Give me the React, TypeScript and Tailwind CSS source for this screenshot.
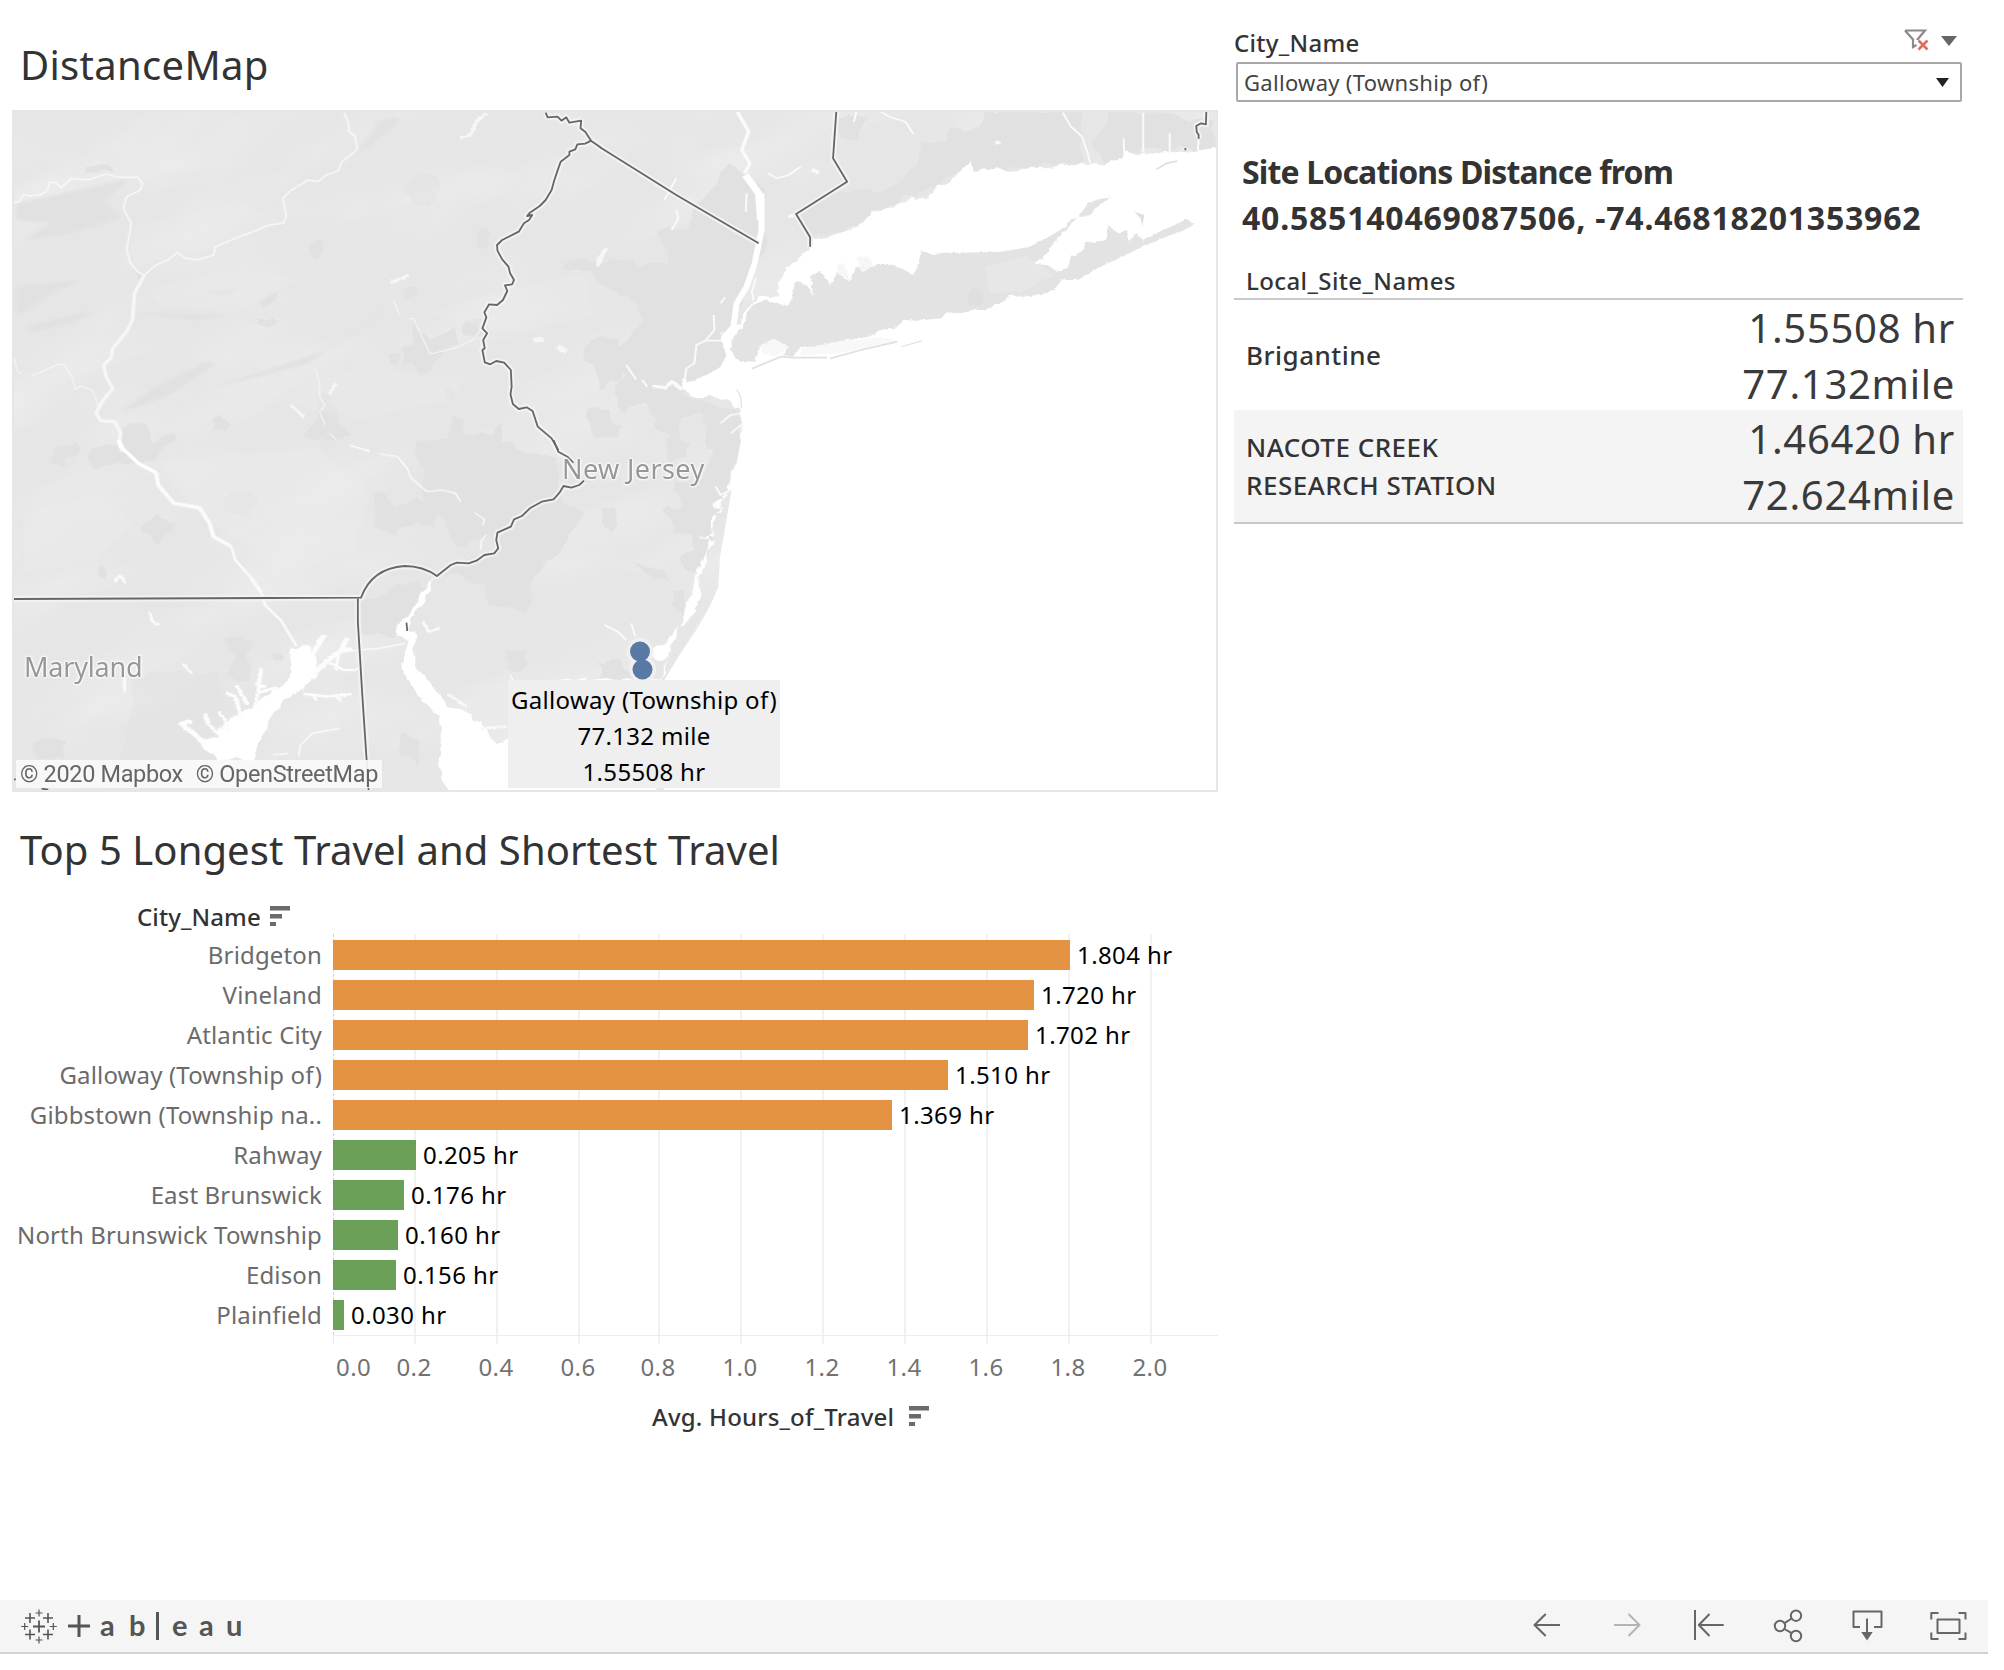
import type { ReactNode } from "react";

const BARS = [
  { city: "Bridgeton", value: "1.804 hr", width: 737, long: true },
  { city: "Vineland", value: "1.720 hr", width: 701, long: true },
  { city: "Atlantic City", value: "1.702 hr", width: 695, long: true },
  { city: "Galloway (Township of)", value: "1.510 hr", width: 615, long: true },
  { city: "Gibbstown (Township na..", value: "1.369 hr", width: 559, long: true },
  { city: "Rahway", value: "0.205 hr", width: 83, long: false },
  { city: "East Brunswick", value: "0.176 hr", width: 71, long: false },
  { city: "North Brunswick Township", value: "0.160 hr", width: 65, long: false },
  { city: "Edison", value: "0.156 hr", width: 63, long: false },
  { city: "Plainfield", value: "0.030 hr", width: 11, long: false },
];

const TICKS = [
  { label: "0.2", x: 81 },
  { label: "0.4", x: 163 },
  { label: "0.6", x: 245 },
  { label: "0.8", x: 325 },
  { label: "1.0", x: 407 },
  { label: "1.2", x: 489 },
  { label: "1.4", x: 571 },
  { label: "1.6", x: 653 },
  { label: "1.8", x: 735 },
  { label: "2.0", x: 817 },
];

const SITES = [
  { name: ["Brigantine"], hours: "1.55508 hr", miles: "77.132mile" },
  { name: ["NACOTE CREEK", "RESEARCH STATION"], hours: "1.46420 hr", miles: "72.624mile" },
];

/* The map is drawn in four quadrant tiles, each with its own coordinate grid. */
const NW = "translate(0 100) scale(0.39541 0.33333)";
const NE = "translate(600 100) scale(0.40179 0.33333)";
const SW = "translate(0 440) scale(0.39541 0.33333)";
const SE = "translate(600 440) scale(0.40179 0.33333)";

const PARK = "#e1e1e1";
const HILL = "#ebebeb";
const RIVER = "#f6f6f6";

const DELAWARE_NW =
  "M1380 38L1385 52L1410 50L1420 62L1432 52L1440 68L1470 62L1468 85L1480 95L1495 122L1480 131L1460 133L1455 148L1440 155L1440 165L1418 185L1410 212L1402 240L1395 270L1380 300L1365 318L1340 338L1333 348L1346 345L1338 360L1325 370L1312 395L1270 420L1257 435L1258 452L1270 478L1286 500L1290 520L1300 540L1295 553L1277 556L1283 573L1272 600L1257 615L1237 613L1225 637L1230 652L1220 685L1232 700L1222 720L1226 745L1220 750L1226 787L1240 793L1255 783L1275 788L1292 810L1294 860L1291 883L1297 912L1312 927L1332 922L1347 933L1360 980L1395 1015L1412 1050";
const DELAWARE_SW =
  "M1400 0L1412 35L1435 50L1450 68M1477 122L1465 135L1445 143L1425 138L1415 158L1400 178L1370 185L1340 205L1320 228L1300 238L1292 260L1258 278L1255 300L1260 325L1250 340L1225 345L1205 362L1185 370L1155 368L1140 375L1105 408Q1070 378 1023 378Q940 385 913 473L35 477M905 475L905 545L916 760L930 1010L932 1050";
const NE_LINES = "M0 142L190 285L395 430M588 36L580 175L615 245L488 342L523 412L523 440M1509 36L1508 73L1496 70L1484 78L1485 95L1490 105L1490 116M1457 144L1457 151";

const ISLAND =
  "M380 615L410 600L440 608L468 618L478 590L483 560L490 541L505 552L520 560L530 592L525 530L545 512L560 530L575 555L590 515L600 530L622 543L630 515L645 500L655 515L690 492L720 492L750 505L780 525L790 500L800 453L830 465L855 458L900 458L1000 455L1070 440L1110 415L1160 380L1170 360L1190 352L1215 310L1240 298L1272 292L1245 315L1226 330L1222 345L1190 350L1170 375L1145 405L1120 445L1100 478L1070 490L1110 495L1140 515L1165 500L1172 470L1205 450L1208 425L1235 425L1262 420L1262 375L1290 400L1312 390L1315 425L1335 400L1352 422L1385 400L1430 375L1460 357L1478 370L1465 385L1420 405L1350 440L1230 510L1190 540L1150 540L1130 570L1095 585L1090 585L1050 590L1018 585L1010 600L960 630L925 630L900 640L862 637L850 655L790 662L755 660L735 685L700 690L670 710L600 722L545 742L500 740L480 770L455 765L470 740L430 716L400 738L385 785L345 783L325 755L328 720L345 690L360 675L365 640Z";

function MapCanvas() {
  return (
    <svg viewBox="14 112 1202 678" className="block h-[678px] w-[1202px]" fill="none">
      <defs>
        <filter id="shore" x="-5%" y="-5%" width="110%" height="110%">
          <feTurbulence type="fractalNoise" baseFrequency="0.09" numOctaves="3" seed="4" />
          <feDisplacementMap in="SourceGraphic" scale="9" xChannelSelector="R" yChannelSelector="G" />
        </filter>
        <filter id="edge" x="-5%" y="-5%" width="110%" height="110%">
          <feTurbulence type="fractalNoise" baseFrequency="0.05" numOctaves="2" seed="9" />
          <feDisplacementMap in="SourceGraphic" scale="14" xChannelSelector="R" yChannelSelector="G" />
        </filter>
        <filter id="relief" x="0" y="0" width="100%" height="100%">
          <feTurbulence type="fractalNoise" baseFrequency="0.006 0.016" numOctaves="3" seed="11" />
          <feColorMatrix values="0 0 0 0 1  0 0 0 0 1  0 0 0 0 1  2.6 0 0 0 -1.15" />
        </filter>
        <filter id="soft">
          <feGaussianBlur stdDeviation="5" />
        </filter>
      </defs>
      <rect x="14" y="112" width="1202" height="678" fill="#e6e6e6" />
      <g transform="rotate(-18 400 400)" opacity="0.22">
        <rect x="-200" y="-200" width="1500" height="1300" filter="url(#relief)" />
      </g>

      {/* ridges of the Appalachians */}
      <g transform={NW} filter="url(#soft)" fill="#e1e1e1">
        <path d="M40 310L200 270L330 235L260 310L310 350L180 400L60 420L130 370L40 360Z" />
        <path d="M40 560L200 540L120 590L40 650Z" />
        <path d="M60 680L240 630L200 660L80 700Z" />
        <path d="M340 640L580 645L500 660Z" />
        <path d="M540 860L700 800L840 745L960 640L1000 600L900 690L780 790L620 840Z" />
        <path d="M300 940L380 870L520 785L550 790L420 890Z" />
        <path d="M520 575L620 560L560 590Z" />
        <path d="M900 170L960 60L1010 50L1000 80L920 150Z" />
      </g>
      <g filter="url(#edge)">
        <g transform={NW} fill={PARK}>
          <path d="M215 200L270 200L275 215L235 232L216 220Z" />
          <path d="M775 440L800 415L823 425L822 460L795 482L778 470Z" />
          <path d="M655 600L675 567L700 575L695 600L665 615Z" />
          <path d="M645 675L660 650L695 650L700 670L680 690Z" />
          <path d="M540 955L560 950L582 975L565 995L540 985Z" />
          <path d="M1045 670L1085 710L1150 675L1157 730L1100 780L1060 830L1045 800L1018 795L1018 740L1048 735Z" />
          <path d="M1170 665L1218 655L1240 690L1200 710L1175 700Z" />
          <path d="M1205 400L1225 388L1240 400L1232 440L1210 450L1202 430Z" />
          <path d="M1020 575L1055 568L1055 590L1035 597Z" />
          <path d="M985 760L1010 755L1010 785L990 788Z" />
          <path d="M800 890L840 890L855 970L885 1018L790 1018L770 1000L800 950Z" />
          <path d="M1025 250L1075 210L1110 240L1112 290L1070 315L1030 285Z" opacity="0.5" />
          <path d="M340 970L370 965L385 1025L440 995L448 1015L425 1050L310 1050L310 985Z" />
          <path d="M1480 740L1520 705L1568 720L1568 840L1520 865L1500 800L1478 780Z" />
          <path d="M1425 495L1460 475L1500 490L1568 480L1568 540L1510 545L1490 505L1440 515Z" />
          <path d="M1145 950L1172 955L1180 1010L1240 1000L1275 965L1270 1050L1135 1050Z" />
          <path d="M1130 870L1150 870L1150 908L1130 905Z" />
          <path d="M1490 930L1540 925L1540 965L1568 985L1568 1010L1500 1010Z" />
          <path d="M345 510L365 507L370 540L350 540Z" />
        </g>
        <g transform={NE} fill={PARK}>
          <path d="M0 500L60 480L90 495L165 488L165 440L140 400L230 385L240 320L300 230L320 190L370 230L410 260L410 420L380 540L330 650L320 700L300 800L210 850L200 880L340 930L355 960L350 1050L260 1050L275 985L240 940L205 950L200 1030L150 1000L140 960L110 910L60 940L30 880L60 820L0 780L60 740L110 660L90 610L0 560Z" />
          <path d="M590 60L620 40L665 50L645 115L600 110Z" />
          <path d="M870 90L950 75L960 36L1200 36L1200 185L1040 205L925 215L905 195L850 245L780 285L715 315L600 395L525 415L495 340L600 270L700 270L760 240L790 190L800 125L870 130Z" />
          <path d="M1270 36L1340 36L1530 60L1530 145L1350 150L1260 190L1230 130Z" />
        </g>
        <g transform={SW} fill={PARK}>
          <path d="M125 70L140 40L195 10L200 35L170 55L160 80Z" />
          <path d="M230 30L320 0L450 0L420 30L360 75L230 75Z" />
          <path d="M560 190L590 155L640 150L658 190L630 230L570 220Z" />
          <path d="M352 260L385 230L400 208L412 240L445 245L440 275L400 308L360 280Z" />
          <path d="M950 160L980 170L985 200L1020 190L1050 165L1105 220L1100 250L1050 245L1000 290L950 255Z" />
          <path d="M1050 0L1250 0L1400 50L1420 180L1480 220L1450 260L1420 330L1380 350L1330 440L1350 480L1320 505L1240 500L1210 430L1160 400L1120 410L1140 370L1250 340L1250 280L1150 320L1130 250L1080 200Z" />
          <path d="M245 385L265 378L275 400L265 418L250 410Z" />
          <path d="M570 600L600 590L632 600L630 720L600 728L575 700L590 650Z" />
          <path d="M684 640L705 625L718 640L715 662L690 665Z" />
          <path d="M915 490L1000 440L1060 420L1080 450L1000 560L1000 585L915 580Z" />
          <path d="M340 720L440 690L550 700L570 830L520 910L550 960L310 960L320 860Z" opacity="0.55" />
          <path d="M90 905L120 890L170 905L165 955L95 955Z" />
          <path d="M1285 635L1330 630L1330 680L1300 700L1290 690Z" />
          <path d="M1510 670L1568 665L1568 700L1530 700Z" />
          <path d="M1012 885L1060 900L1060 975L1020 950Z" />
        </g>
        <g transform={SE} fill={PARK}>
          <path d="M160 0L215 0L215 50L180 60Z" />
          <path d="M290 0L350 0L325 150L300 200L270 260L285 300L260 350L245 400L215 400L195 350L240 330L225 290L180 280L175 230L155 215L165 195L205 200L190 130L250 120Z" />
          <path d="M5 210L35 200L40 250L20 270L5 250Z" />
          <path d="M85 370L140 390L180 420L120 410Z" />
          <path d="M180 445L205 445L225 530L185 500Z" />
          <path d="M0 670L50 655L65 680L90 720L0 720Z" />
        </g>
      </g>
      <g transform={NW} fill={HILL} opacity="0.4" filter="url(#soft)">
        <path d="M330 380L600 300L720 370L560 440L340 500Z" />
        <path d="M380 560L620 500L760 540L600 640L400 620Z" />
        <path d="M1080 640L1300 560L1480 520L1500 650L1300 700Z" />
        <path d="M700 900L900 800L1180 830L1150 900L900 960Z" />
      </g>
      <g transform={SW} fill={HILL} opacity="0.5" filter="url(#soft)">
        <path d="M400 60L800 20L940 150L900 330L700 420L640 340L480 200Z" />
        <path d="M60 220L250 160L340 250L240 360L60 400Z" />
      </g>

      {/* bays, sound and ocean */}
      <g fill="#fff">
        <g filter="url(#shore)">
          <path transform={NE} d="M1560 138L1500 150L1480 163L1420 152L1385 155L1340 165L1315 155L1303 170L1280 178L1260 190L1215 195L1170 192L1110 205L1060 203L1035 215L1000 205L970 208L935 220L925 215L919 170L905 208L880 235L868 252L850 250L835 270L815 298L800 295L780 288L760 305L740 318L680 335L655 360L620 390L580 405L535 418L522 445L495 478L465 505L450 540L442 555L450 585L400 592L378 612L360 640L352 675L300 700L305 725L315 770L300 795L275 820L240 838L205 845L205 870L235 892L290 890L330 915L350 930L355 1050L1560 1050Z" />
          <path transform={SE} d="M354 0L345 60L332 145L300 165L308 172L278 195L305 210L275 245L285 290L242 290L290 305L262 340L268 370L245 410L252 470L228 530L180 575L168 605L150 625L170 650L150 700L150 740L140 1060L-120 1060L-120 720L150 720L360 -5Z" />
        </g>
        <path transform={NE} d="M355 1000L353 1060L1560 1060L1560 600L1200 560Z" />
        <path transform={SE} d="M353 -10L330 130L318 200L305 290L295 350L292 440L270 500L240 560L195 650L160 720L160 1060L1560 1060L1560 -10Z" />
      </g>
      <g transform={SE} stroke="#e6e6e6">
        <path d="M326 150L318 205L306 290L297 350L293 440L272 498L243 560L196 645" strokeWidth="3" />
      </g>
      <g transform={NE} filter="url(#shore)">
        <path d={ISLAND} fill="#e3e3e3" />
        <path d="M930 560L955 580L950 615L920 620L915 585Z" fill="#dfdfdf" />
        <path d="M960 500L1060 470L1100 500L1130 525L1050 575L970 580Z" fill="#e7e7e7" />
        <path d="M400 740L432 716L470 742L440 768L405 765ZM500 745L600 725L700 712L745 720L700 735L600 760L500 765Z" fill="#f8f8f8" />
        <path d="M590 500L605 485L622 540L595 520ZM640 470L670 470L680 500L650 515Z" fill="#f6f6f6" />
      </g>
      <g transform={NE} stroke="#e0e0e0" strokeWidth="5">
        <path d="M378 806L450 770L480 773L565 773M572 776L650 750L740 725M1385 208L1410 190L1437 183" />
        <path d="M750 740L802 722M340 868L350 890L353 925" strokeWidth="3" />
        <path d="M1330 335L1355 345L1350 378L1345 355Z" fill="#e0e0e0" stroke="none" />
      </g>
      <path transform={NE} d="M300 730L315 765L300 800L270 822L215 848L215 810L238 770L240 732L270 735Z" fill="#e1e1e1" />

      <g fill="#fff" filter="url(#shore)">
        <path transform={SW} d="M1105 408L1080 430L1060 475L1030 530L1002 560L1005 590L1030 608L1015 680L1030 712L1062 775L1110 830L1115 900L1110 1000L1145 1060L1400 1060L1400 900L1285 895L1255 915L1235 880L1190 820L1130 795L1085 720L1045 680L1045 630L1053 590L1030 565L1048 520L1075 480L1090 430Z" />
        <path transform={SW} d="M742 620L792 622L800 650L795 680L800 700L765 750L722 775L695 815L668 870L642 960L560 960L515 925L500 890L550 900L548 870L600 820L640 800L670 765L735 712L742 690L728 660Z" />
      </g>
      <g transform={SW} stroke="#fcfcfc" strokeLinejoin="round" strokeLinecap="round" filter="url(#shore)">
        <path strokeWidth="13" d="M792 640L805 615L818 588M795 700L830 660L862 632L876 600M865 632L885 628M515 910L490 880L458 852L480 845" />
        <path strokeWidth="10" d="M550 880L525 850L520 825M575 870L570 840L555 820M610 830L595 770L575 760M600 740L625 790M645 800L655 740L660 690M660 755L700 745M670 740L650 735" />
        <path strokeWidth="8" d="M835 670L870 690L903 690M770 762L830 770L888 762M790 765L800 780M850 765L860 780M855 645L850 690" />
      </g>

      {/* rivers */}
      <g transform={NW} stroke={RIVER} strokeLinejoin="round">
        <path strokeWidth="5" d="M35 308L48 305L60 283L75 288L105 283L120 270L125 247L140 247L155 263L180 235L220 240L270 222L298 232L348 232L360 250L355 270L320 290L312 325L332 370L320 450L330 490L350 517L365 525" />
        <path strokeWidth="5" d="M365 525L395 495L425 480L448 458L470 475L500 480L540 465L545 440L610 408L640 395L680 375L715 370L724 350L715 295L735 272L780 240L805 245L825 225L855 212L865 185L903 150L898 108L883 95L880 65L870 38" />
        <path strokeWidth="9" d="M365 525L340 580L335 660L320 695L285 745L280 775L262 795L268 830L285 865L258 905L243 940L255 962L290 965L305 1000L300 1030L310 1055" />
        <path strokeWidth="3" d="M37 775L42 810L55 823M80 828L150 792L163 795L183 835L190 868L205 858L235 872L247 910L247 930M995 600L1010 645M1033 658L1045 655L1088 762L1150 745L1195 720L1218 688M797 805L808 850L808 890L822 915L808 935L822 975M835 1000L850 1020M885 1038L935 1050" />
        <g filter="url(#shore)">
          <path strokeWidth="9" d="M1230 40L1205 65L1190 105L1160 115M1535 445L1515 470L1512 500M988 548L1035 525M735 915L770 952M850 850L832 885" />
          <path strokeWidth="14" d="M1408 740L1432 755M1350 720L1375 718" />
        </g>
      </g>
      <g transform={NE} stroke="#fafafa" strokeLinejoin="round">
        <path strokeWidth="9" d="M342 36L370 95L353 150L373 190L360 220" />
        <path strokeWidth="18" d="M362 225L395 280L400 360" stroke="#fff" />
        <path strokeWidth="15" d="M402 280L402 390L385 490L365 560L340 610L332 680L310 710" stroke="#fff" />
        <path strokeWidth="5" d="M388 535L378 575L382 600M365 280L363 335M210 845L215 805L235 790L240 735L262 722L300 722M283 645L285 690L262 722M190 235L160 300M190 330L195 355L178 390M418 220L440 235L470 225L500 200M300 610L312 592M65 795L90 838M105 840L118 860" />
        <path strokeWidth="5" d="M1152 38L1172 80L1200 110L1215 165L1220 190M1352 38L1352 155M1303 115L1305 170M1418 100L1418 160M1490 118L1488 150M700 36L720 50L760 65L780 102M638 36L632 65" />
        <g filter="url(#shore)">
          <path strokeWidth="10" d="M205 870L180 845L165 862L130 860M985 130L997 125M470 350L485 345M527 208L545 218" />
        </g>
        <path strokeWidth="5" d="M300 970L325 945L352 940M325 1000L352 975M0 490L15 445" />
      </g>
      <g transform={SW} stroke="#fafafa" strokeLinejoin="round">
        <path strokeWidth="10" stroke="#fff" d="M300 0L310 25L350 70L395 98" />
        <path strokeWidth="11" d="M395 98L400 135L440 190L505 203L530 250L540 290L585 320" />
        <path strokeWidth="7" d="M585 320L595 360L640 420L665 468L670 495L710 540L750 618" />
        <path strokeWidth="9" d="M635 415L660 455" />
        <path strokeWidth="4" d="M885 15L935 35M960 42L1005 50L1030 85L1040 115L1080 155L1120 150L1152 160L1165 185M1200 218L1225 238L1222 255M1230 285L1218 300L1215 330M865 635L960 625L1025 610M755 950L760 915L790 880L860 865M1290 705L1300 725M1530 555L1568 580M690 945L730 940" />
        <g filter="url(#shore)">
          <path strokeWidth="8" d="M290 425L305 405L318 430M378 515L385 545L405 555M462 670L485 700M315 715L315 755M1070 545L1085 575L1112 565M1215 865L1280 860M1130 760L1180 800" />
        </g>
      </g>
      <g transform={SE} stroke="#fafafa" strokeWidth="5">
        <path d="M12 555L45 575L65 600M78 550L88 590M288 140L300 165L325 150" />
      </g>
      <circle cx="660" cy="653" r="8" fill="#fff" />

      {/* state borders */}
      <g fill="none" strokeLinejoin="round">
        <g stroke="#f4f4f4" strokeOpacity="0.9">
          <path transform={NW} d={DELAWARE_NW} strokeWidth="6" vectorEffect="non-scaling-stroke" />
          <path transform={SW} d={DELAWARE_SW} strokeWidth="6" vectorEffect="non-scaling-stroke" />
          <path transform={NE} d={NE_LINES} strokeWidth="6" vectorEffect="non-scaling-stroke" />
          <path d="M591 140.7L602 148.4" strokeWidth="6" />
        </g>
        <g stroke="#666">
          <path transform={NW} d={DELAWARE_NW} strokeWidth="1.8" vectorEffect="non-scaling-stroke" />
          <path transform={SW} d={DELAWARE_SW} strokeWidth="1.8" vectorEffect="non-scaling-stroke" />
          <path transform={NE} d={NE_LINES} strokeWidth="1.8" vectorEffect="non-scaling-stroke" />
          <path d="M591 140.7L601 147.8" strokeWidth="1.8" />
          <path transform={SW} d="M1028 548L1030 573M35 1018L40 1018M105 1046L122 1049" strokeWidth="1.8" vectorEffect="non-scaling-stroke" />
        </g>
      </g>

      {/* site markers */}
      <g fill="#f0f0f0">
        <circle cx="640" cy="651.5" r="13.5" />
        <circle cx="642.5" cy="669.5" r="13.5" />
      </g>
      <g fill="#5779a3">
        <circle cx="640" cy="651.5" r="10" />
        <circle cx="642.5" cy="669.5" r="10" />
      </g>
    </svg>
  );
}

function SortIcon() {
  return (
    <svg viewBox="0 0 20 20" className="h-5 w-5" fill="#6b6b6b">
      <rect y="0" width="20" height="4.5" />
      <rect y="8" width="12" height="4.5" />
      <rect y="16" width="6" height="4" />
    </svg>
  );
}

function DistanceMap() {
  return (
    <section>
      <h1 className="h-[110px] pt-[35px] pl-[20px] text-[40px] leading-[60px] font-normal tracking-[0.3px] text-[#333]">DistanceMap</h1>
      <div className="relative ml-3 h-[682px] w-[1206px] overflow-hidden border-2 border-[#e6e6e6]">
        <MapCanvas />
        <span className="absolute top-[339px] left-[548px] text-[27px] leading-9 tracking-[0.4px] whitespace-nowrap text-[#979797] [text-shadow:0_0_2px_#fff,0_0_2px_#fff,0_0_3px_#fff,0_0_3px_#fff]">New Jersey</span>
        <span className="absolute top-[537px] left-[10px] text-[27px] leading-9 tracking-[-0.2px] text-[#979797] [text-shadow:0_0_2px_#fff,0_0_2px_#fff,0_0_3px_#fff,0_0_3px_#fff]">Maryland</span>
        <div className="absolute top-[648px] left-[2px] flex h-7 w-[366px] items-center justify-between bg-[#fafafa]/90 pr-[4px] pl-[4px] font-[Roboto] text-[23.5px] leading-7 tracking-[-0.35px] whitespace-nowrap text-[#666]">
          <span>© 2020 Mapbox</span>
          <span>© OpenStreetMap</span>
        </div>
        <div className="absolute top-[568px] left-[494px] flex h-[108px] w-[272px] flex-col items-center bg-[#efefef] pt-[2px] text-[24px] leading-9 font-normal tracking-[0.3px] whitespace-nowrap text-black">
          <span>Galloway (Township of)</span>
          <span>77.132 mile</span>
          <span>1.55508 hr</span>
        </div>
      </div>
    </section>
  );
}

function TravelChart() {
  return (
    <section>
      <h2 className="mt-[28px] h-[60px] pl-5 text-[40px] leading-[60px] font-normal tracking-[0.07px] text-[#333]">Top 5 Longest Travel and Shortest Travel</h2>
      <div className="mt-[21px] flex h-[33px] items-start gap-[9px] pl-[137px]">
        <span className="text-[24px] leading-8 font-medium tracking-[0.1px] text-[#333]">City_Name</span>
        <span className="pt-[5px]">
          <SortIcon />
        </span>
      </div>
      <div className="relative h-[402px]">
        <div className="absolute inset-y-0 right-0 left-[333px]">
          <div className="h-[401px] w-0 border-l border-dashed border-[#cfcfcf]" />
          {TICKS.map((t) => (
            <div key={t.label} className="absolute top-0 h-[410px] w-[2px] bg-[#f1f1f1]" style={{ left: t.x }} />
          ))}
          <div className="absolute top-[401px] left-0 h-[1px] w-full bg-[#ededed]" />
          <div className="absolute top-[401px] left-0 h-[9px] w-[1px] bg-[#ededed]" />
        </div>
        <div className="relative flex flex-col gap-[10px] pt-[6px]">
          {BARS.map((b) => (
            <div key={b.city} className="flex h-[30px] items-center text-[24px] leading-[30px] font-normal whitespace-nowrap">
              <span className="w-[322px] text-right tracking-[0.15px] text-[#6b6b6b]">{b.city}</span>
              <div className={b.long ? "ml-[11px] h-[30px] bg-[#e49342]" : "ml-[11px] h-[30px] bg-[#6a9f58]"} style={{ width: b.width }} />
              <span className="ml-[7px] tracking-[0.4px] text-black">{b.value}</span>
            </div>
          ))}
        </div>
      </div>
      <div className="relative mt-[15px] ml-[333px] h-8 text-[24px] leading-8 font-normal tracking-[0.4px] text-[#727272]">
        <span className="pl-[3px]">0.0</span>
        {TICKS.map((t) => (
          <span key={t.label} className="absolute top-0 w-[60px] text-center" style={{ left: t.x - 30 }}>
            {t.label}
          </span>
        ))}
      </div>
      <div className="mt-[18px] flex items-start gap-[15px] pl-[652px]">
        <span className="text-[24px] leading-8 font-medium tracking-[0.2px] text-[#333]">Avg. Hours_of_Travel</span>
        <span className="pt-[5px]">
          <SortIcon />
        </span>
      </div>
    </section>
  );
}

function FilterIcon() {
  return (
    <svg viewBox="0 0 25 22" className="h-[22px] w-[25px]" fill="none">
      <path d="M1 1.5H21L13.5 10.5V11M1 1.5L9 10.5V18L12.5 16" stroke="#8a8a8a" strokeWidth="2.2" />
      <path d="M14.5 11.5L23.5 20.5M23.5 11.5L14.5 20.5" stroke="#d9705f" strokeWidth="2.6" />
    </svg>
  );
}

function SidePanel() {
  return (
    <aside className="ml-4 w-[729px]">
      <div className="flex h-[62px] items-start justify-between pt-[27px] pr-[6px]">
        <span className="text-[24px] leading-8 font-medium tracking-[0.3px] text-[#333]">City_Name</span>
        <div className="flex items-start gap-[12px] pt-[2px]">
          <FilterIcon />
          <svg viewBox="0 0 16 10" className="mt-[7px] h-[10px] w-4" fill="#666">
            <path d="M0 0H16L8 10Z" />
          </svg>
        </div>
      </div>
      <div className="ml-[2px] flex h-10 w-[726px] items-center justify-between rounded-[2px] border-2 border-[#a9a9a9] pr-[11px] pl-[6px]">
        <span className="text-[22px] leading-9 font-normal tracking-[0.3px] text-[#444]">Galloway (Township of)</span>
        <svg viewBox="0 0 13 9" className="h-[9px] w-[13px]" fill="#222">
          <path d="M0 0H13L6.5 9Z" />
        </svg>
      </div>
      <div className="mt-[47px] pl-[8px] text-[32px] leading-[46px] font-bold whitespace-nowrap text-[#333]">
        <p className="tracking-[-0.85px]">Site Locations Distance from</p>
        <p className="tracking-[0.78px]">40.585140469087506, -74.46818201353962</p>
      </div>
      <div className="mt-[24px] h-[35px] border-b-2 border-[#c8c8c8] pl-[12px] text-[24px] leading-8 font-medium tracking-[0.4px] text-[#333]">Local_Site_Names</div>
      <div className="border-b-2 border-[#c8c8c8]">
        {SITES.map((s, i) => (
          <div key={s.miles} className={i === 1 ? "flex h-[112px] items-center justify-between bg-[#f4f4f4] pr-[8px] pl-[12px]" : "flex h-[110px] items-center justify-between bg-white pr-[8px] pl-[12px]"}>
            <div className="text-[26px] leading-[38px] font-medium tracking-[0.5px] text-[#333]">
              {s.name.map((n) => (
                <div key={n}>{n}</div>
              ))}
            </div>
            <div className="pt-[2px] text-right text-[40px] leading-[56px] font-normal tracking-[0.7px] text-[#3a3a3a]">
              <div>{s.hours}</div>
              <div>{s.miles}</div>
            </div>
          </div>
        ))}
      </div>
    </aside>
  );
}

function Tool({ label, className, children }: { label: string; className: string; children: ReactNode }) {
  return (
    <button aria-label={label} className={className}>
      <svg viewBox="0 0 40 52" className="h-[52px] w-10" fill="none" stroke="#666" strokeWidth="2" strokeLinejoin="round">
        {children}
      </svg>
    </button>
  );
}

function TableauLogo() {
  const pluses = [
    { x: 18, y: 17.5, r: 6, w: 1.8 },
    { x: 9, y: 9, r: 5, w: 1.6 },
    { x: 27, y: 9, r: 5, w: 1.6 },
    { x: 9, y: 25.5, r: 5, w: 1.6 },
    { x: 27, y: 25.5, r: 5, w: 1.6 },
    { x: 18, y: 4, r: 3.5, w: 1.2 },
    { x: 18, y: 31, r: 3.5, w: 1.2 },
    { x: 3.7, y: 17.5, r: 3.5, w: 1.2 },
    { x: 32.3, y: 17.5, r: 3.5, w: 1.2 },
  ];
  return (
    <svg viewBox="0 0 36 35" className="h-[35px] w-9" fill="none" stroke="#555">
      {pluses.map((p) => (
        <path key={`${p.x}-${p.y}`} d={`M${p.x - p.r} ${p.y}h${p.r * 2}M${p.x} ${p.y - p.r}v${p.r * 2}`} strokeWidth={p.w} />
      ))}
    </svg>
  );
}

function Footer() {
  return (
    <footer className="flex h-[54px] w-[1988px] items-start justify-between border-b-2 border-[#d2d2d2] bg-[#f5f5f5] pl-[21px]">
      <div className="flex h-[52px] items-center">
        <TableauLogo />
        <svg viewBox="0 0 22 22" className="ml-[11px] h-[22px] w-[22px]" stroke="#555" strokeWidth="3">
          <path d="M0 11H22M11 0V22" />
        </svg>
        <div className="ml-[10px] flex pb-[3px] font-[Lato] text-[29px] leading-[40px] font-bold text-[#555]">
          <span className="w-[29px]">a</span>
          <span className="w-[27px]">b</span>
          <span className="mt-[7px] mr-[13px] ml-0 h-[28px] w-[3px] bg-[#555]" />
          <span className="w-[27px]">e</span>
          <span className="w-[27px]">a</span>
          <span className="w-[20px]">u</span>
        </div>
      </div>
      <div className="flex">
        <Tool label="Undo" className="mr-10">
          <path d="M33 25H7M18.7 14L7.5 25L18.7 36" />
        </Tool>
        <Tool label="Redo" className="mr-[43px] opacity-45">
          <path d="M7 25H33M21.5 14L32.5 25L21.5 36" />
        </Tool>
        <Tool label="Revert" className="mr-[38px]">
          <path d="M5 10V40M33.7 25H9M19.5 14L8.8 25L19.5 36" />
        </Tool>
        <Tool label="Share" className="mr-[39px]">
          <circle cx="12" cy="26" r="5.2" />
          <circle cx="28" cy="15.7" r="5.2" />
          <circle cx="28" cy="36" r="5.2" />
          <path d="M16.5 23.2L23.6 18.5M16.5 29L23.6 33.2" />
        </Tool>
        <Tool label="Download" className="mr-[41px]">
          <path d="M13 27H6.5V11.5H34.5V27H27M20 18.5V33" />
          <path d="M14.3 32H25.7L20 40.5Z" fill="#666" stroke="none" />
        </Tool>
        <Tool label="Full screen" className="mr-5">
          <rect x="9.5" y="19.5" width="22" height="13.5" />
          <path d="M3.3 19.5V13H10.5M30.5 13H37.5V19.5M37.5 32.5V39H30.5M10.5 39H3.3V32.5" />
        </Tool>
      </div>
    </footer>
  );
}

export default function App() {
  return (
    <div className="h-[1670px] w-[2004px] overflow-hidden bg-white font-['Noto_Sans',sans-serif]">
      <main className="flex h-[1600px]">
        <div className="w-[1218px] shrink-0">
          <DistanceMap />
          <TravelChart />
        </div>
        <SidePanel />
      </main>
      <Footer />
    </div>
  );
}
